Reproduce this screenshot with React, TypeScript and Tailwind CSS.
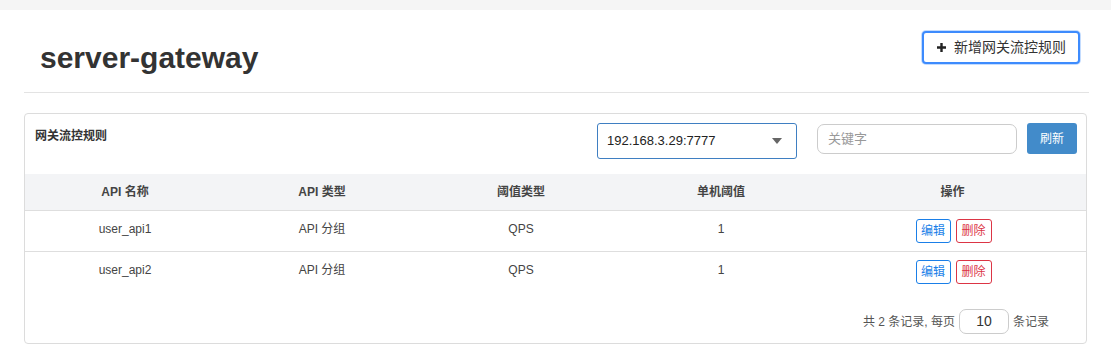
import React from 'react';

const rows = [
  { name: 'user_api1', type: 'API 分组', grade: 'QPS', count: 1 },
  { name: 'user_api2', type: 'API 分组', grade: 'QPS', count: 1 },
];

const font = { fontFamily: '"Liberation Sans", "Noto Sans CJK SC", sans-serif' };

export default function App() {
  return (
    <div className="w-[1111px] h-[353px] bg-white text-[#333] overflow-hidden" style={font}>
      <div className="h-[10px] bg-[#f5f5f5]" />

      <div className="px-[24px]">
        <div className="flex items-start justify-between pl-[16px] pr-[9px] pt-[21px] pb-[19px] border-b border-[#e3e3e3] mr-[-2px]">
          <h1 className="text-[30px] font-bold leading-none mt-[12px]">server-gateway</h1>
          <button className="h-[33px] px-[12px] flex items-center gap-[7px] bg-white border-2 border-[#3d8bfd] rounded-[4px] text-[14px] text-[#333] shadow-[0_0_0_1px_rgba(61,139,253,0.3)]">
            <svg width="11" height="11" viewBox="0 0 11 11">
              <path d="M5.5 1v9M1 5.5h9" stroke="#222" strokeWidth="2.4" />
            </svg>
            新增网关流控规则
          </button>
        </div>

        <div className="mt-[20px] border border-[#dcdcdc] rounded-[4px] h-[231px] flex flex-col">
          <div className="flex items-start justify-between pl-[10px] pr-[9px] pt-[9px] h-[60px]">
            <div className="text-[12px] font-bold mt-[4px]">网关流控规则</div>
            <div className="flex items-start">
              <div className="w-[200px] h-[36px] border border-[#3f7fc2] rounded-[3px] flex items-center justify-between pl-[9px] pr-[14px] text-[13px] text-[#222]">
                <span>192.168.3.29:7777</span>
                <svg width="10" height="6" viewBox="0 0 10 6"><path d="M0 0h10L5 6z" fill="#666" /></svg>
              </div>
              <div className="ml-[20px] mt-[1px] w-[200px] h-[30px] border border-[#ccc] rounded-[7px] flex items-center px-[10px] text-[13px] text-[#999]">
                关键字
              </div>
              <button className="ml-[10px] w-[50px] h-[31px] bg-[#428bca] text-white text-[12px] rounded-[3px]">刷新</button>
            </div>
          </div>

          <table className="w-full text-[12px] border-collapse table-fixed">
            <colgroup>
              <col className="w-[200px]" />
              <col className="w-[194px]" />
              <col className="w-[204px]" />
              <col className="w-[196px]" />
              <col />
            </colgroup>
            <thead>
              <tr className="bg-[#f3f4f6] h-[36px] border-b border-[#dedede]">
                <th className="font-bold text-[#444]">API 名称</th>
                <th className="font-bold text-[#444]">API 类型</th>
                <th className="font-bold text-[#444]">阈值类型</th>
                <th className="font-bold text-[#444]">单机阈值</th>
                <th className="font-bold text-[#444]">操作</th>
              </tr>
            </thead>
            <tbody>
              {rows.map((r, i) => (
                <tr key={r.name} className={i === 0 ? 'border-b border-[#dedede] h-[41px]' : 'h-[41px]'}>
                  <td className="text-center align-top pt-[9px] text-[#444]">{r.name}</td>
                  <td className="text-center align-top pt-[9px] text-[#444]">{r.type}</td>
                  <td className="text-center align-top pt-[9px] text-[#444]">{r.grade}</td>
                  <td className="text-center align-top pt-[9px] text-[#444]">{r.count}</td>
                  <td className="text-center align-top pt-[8px]">
                    <div className="inline-flex gap-[5px] pl-[2px]">
                      <button className="w-[35px] h-[24px] border border-[#1a7fe8] rounded-[3px] text-[#1a7fe8] text-[12px]">编辑</button>
                      <button className="w-[36px] h-[24px] border border-[#dc3545] rounded-[3px] text-[#dc3545] text-[12px]">删除</button>
                    </div>
                  </td>
                </tr>
              ))}
            </tbody>
          </table>

          <div className="flex-1 flex items-end justify-end pr-[37px] pb-[9px] text-[12px] text-[#555]">
            <div className="flex items-center">
              <span>共 2 条记录, 每页</span>
              <div className="mx-[4px] w-[50px] h-[25px] border border-[#ccc] rounded-[7px] flex items-center justify-center text-[14px] text-[#333]">10</div>
              <span>条记录</span>
            </div>
          </div>
        </div>
      </div>
    </div>
  );
}
